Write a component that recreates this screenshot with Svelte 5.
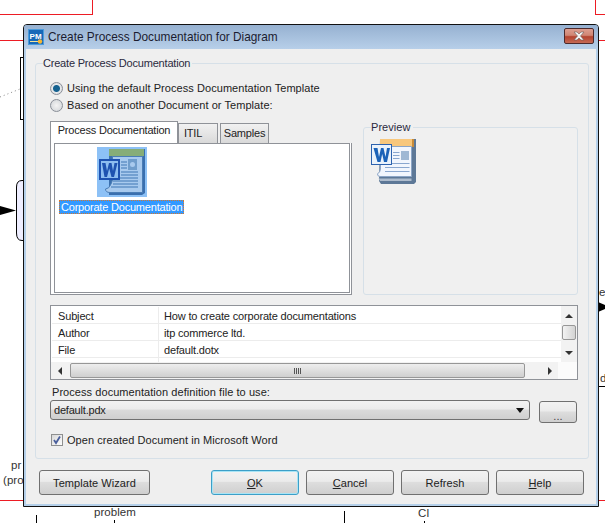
<script>
  const rows = [
    { key: 'Subject', value: 'How to create corporate documentations' },
    { key: 'Author', value: 'itp commerce ltd.' },
    { key: 'File', value: 'default.dotx' }
  ];
  const tabs = ['Process Documentation', 'ITIL', 'Samples'];
</script>

<div class="desktop">
  <svg class="diagram" width="605" height="523" viewBox="0 0 605 523">
    <g fill="none" stroke="#ed1c24" shape-rendering="crispEdges">
      <path d="M0 14.5H92.5V0" />
      <path d="M0 40.5H24" />
      <path d="M595.5 0V14.5H605" />
      <path d="M598 40.5H605" />
      <path d="M0 500.5H24" />
      <path d="M598 500.5H605" />
    </g>
    <path d="M24 57.5H20.5V119.5H24" fill="none" stroke="#000" shape-rendering="crispEdges" />
    <path d="M0 97L20 89" fill="none" stroke="#888" stroke-dasharray="1 3" />
    <path d="M24 180.5H22Q16.5 180.500 16.5 187V233Q16.5 240.500 22 240.500H24" fill="#eeeeff" stroke="#000" />
    <path d="M0 206L16 210.500L0 215Z" fill="#000" />
    <path d="M598 302L605 305L605 309L598 312Z" fill="#000" />
    <path d="M598 386.500H605" stroke="#000" shape-rendering="crispEdges" />
    <path d="M36.500 515V523M114.500 520V523M344.500 511V523M424.500 521V523" stroke="#000" shape-rendering="crispEdges" />
    <g class="dtext">
      <text x="11" y="469">pr</text>
      <text x="3" y="484">(pro</text>
      <text x="94" y="516">problem</text>
      <text x="418" y="517">CI</text>
      <text x="599" y="296">ec</text>
      <text x="600" y="382">d</text>
    </g>
  </svg>

  <div class="window">
    <div class="titlebar">
      <svg class="appicon" width="16" height="16" viewBox="0 0 16 16">
        <rect width="16" height="16" fill="#4a9bdc" />
        <rect x="1" y="1" width="14" height="14" fill="#1668b8" />
        <path d="M2 12.500H10" stroke="#f3e39a" />
        <circle cx="12" cy="12.500" r="2.200" fill="#f7b733" />
        <text x="1.500" y="9.500" class="pm">PM</text>
      </svg>
      <span class="title">Create Process Documentation for Diagram</span>
      <div class="close">
        <svg width="16" height="10" viewBox="0 0 16 10">
          <path d="M3 1L6 1L8 3L10 1L13 1L9.500 5L13 9L10 9L8 7L6 9L3 9L6.500 5Z" fill="#f2f2f2" stroke="#6b5a58" stroke-width="0.6" />
        </svg>
      </div>
    </div>

    <div class="body">
      <fieldset class="group main">
        <legend>Create Process Documentation</legend>

        <div class="radios">
          <label class="radio"><span class="dot on"></span>Using the default Process Documentation Template</label>
          <label class="radio"><span class="dot"></span>Based on another Document or Template:</label>
        </div>

        <div class="split">
          <div class="tabs">
            <div class="tabstrip">
              {#each tabs as tab, i}
                <div class="tab" class:active={i === 0}>{tab}</div>
              {/each}
            </div>
            <div class="panel">
              <div class="inner">
                <div class="item">
                  <div class="tile">
                    <svg width="50" height="50" viewBox="0 0 50 50">
                      <rect width="50" height="50" fill="#8dc1f6" />
                      <path d="M12 2H48V46L45 48H12Z" fill="#3a6fae" />
                      <rect x="12" y="2" width="35" height="7" fill="#86ad78" />
                      <path d="M15.500 9.500H45.500V45.500H13Q8.500 45.500 8.500 42Q12 42 14 37L15.500 33Z" fill="#a8caee" stroke="#4a7db6" />
                      <rect x="31" y="12" width="9" height="11" fill="#6f9dcc" />
                      <circle cx="35.500" cy="17.500" r="2.500" fill="#a8caee" />
                      <path d="M24 15H30M24 18H30M24 21H30M24 25H41M24 28H41M16 31H41M16 34H41M16 37H41M14 40H41" stroke="#3f76b4" />
                      <rect x="2" y="12" width="21" height="21" fill="#1e52b0" />
                      <rect x="4" y="14" width="17" height="17" fill="#8dbdf0" />
                      <path d="M5 16H8.500L10 24L12 16H14.500L16 24L17.500 16H20.500L17 30H14.500L12.200 21.500L10 30H7.500Z" fill="#1e52b0" />
                    </svg>
                  </div>
                  <span class="caption">Corporate Documentation</span>
                </div>
              </div>
            </div>
          </div>

          <fieldset class="group preview">
            <legend>Preview</legend>
            <svg width="46" height="46" viewBox="0 0 46 46">
              <path d="M9 1H45V44L43 46H10L8 43Z" fill="#5d7897" />
              <rect x="9" y="1" width="34" height="8" fill="#f8c77c" />
              <rect x="41" y="1" width="2" height="8" fill="#c98c3a" />
              <path d="M7.500 40.500H40.500V43H9Z" fill="#aebccd" />
              <path d="M9.500 8.500H40.500V38.500H9Q6.500 38.500 6.500 36Q9.500 34 9.500 30Z" fill="#f2f6fd" stroke="#8ca5c6" />
              <rect x="30" y="13" width="8" height="9" fill="#9fb8d4" />
              <path d="M22 14.500H28.500M22 17.500H28.500M22 20.500H28.500M14 25.500H38.500M14 29.500H38.500M14 33.500H38.500" stroke="#8aa7cf" />
              <rect x="0.500" y="6.500" width="20" height="20" fill="#eaf2fb" stroke="#2d62ae" />
              <path d="M2.500 10H6.500L8 19L10 10H12.500L14.500 19L16 10H19L16 24H13L11.200 16L9.500 24H6.500Z" fill="#1b62b8" />
            </svg>
          </fieldset>
        </div>

        <div class="props">
          <div class="propmain">
            <div class="grid">
              {#each rows as row}
                <div class="row">
                  <span class="key">{row.key}</span>
                  <span class="val">{row.value}</span>
                </div>
              {/each}
              <div class="row"><span class="key"></span><span class="val"></span></div>
            </div>
            <div class="vscroll">
              <span class="arrow up"></span>
              <span class="vthumb"></span>
              <span class="arrow down"></span>
            </div>
          </div>
          <div class="hscroll">
            <span class="arrow left"></span>
            <span class="hthumb"><span class="grip"></span></span>
            <span class="arrow right"></span>
          </div>
        </div>

        <div class="fieldlabel">Process documentation definition file to use:</div>
        <div class="comborow">
          <div class="combo">
            <span>default.pdx</span>
            <span class="caret"></span>
          </div>
          <div class="btn dots">...</div>
        </div>

        <label class="check">
          <span class="box">
            <svg width="10" height="10" viewBox="0 0 10 10">
              <path d="M2 5L4 8L8 1.500" fill="none" stroke="#4a5f9c" stroke-width="1.800" />
            </svg>
          </span>
          Open created Document in Microsoft Word
        </label>
      </fieldset>

      <div class="buttons">
        <div class="btn wizard">Template Wizard</div>
        <div class="btn default"><u>O</u>K</div>
        <div class="btn"><u>C</u>ancel</div>
        <div class="btn">Refresh</div>
        <div class="btn"><u>H</u>elp</div>
      </div>
    </div>
  </div>
</div>

<style>
  :global(body) {
    margin: 0;
    background: #fff;
  }

  .desktop {
    position: relative;
    width: 605px;
    height: 523px;
    overflow: hidden;
    font-family: "Liberation Sans", sans-serif;
    font-size: 11px;
    letter-spacing: 0.06px;
    color: #222;
  }

  .diagram {
    position: absolute;
    left: 0;
    top: 0;
  }

  .dtext text {
    font-family: "Liberation Sans", sans-serif;
    font-size: 11.500px;
    fill: #333;
  }

  .window {
    position: absolute;
    left: 23px;
    top: 24px;
    width: 576px;
    height: 483px;
    box-sizing: border-box;
    display: flex;
    flex-direction: column;
    border: 1px solid #111;
    border-radius: 4px 4px 0 0;
    background: #b5d0ea;
  }

  .titlebar {
    height: 24px;
    display: flex;
    align-items: center;
    padding: 0 4px;
    flex: none;
    background: linear-gradient(#96b1d1, #b7cfe9);
    border-radius: 3px 3px 0 0;
  }

  .appicon {
    margin-right: 2px;
    flex: none;
  }

  .pm {
    font-family: "Liberation Sans", sans-serif;
    font-size: 8px;
    font-weight: 700;
    fill: #fff;
  }

  .title {
    flex: 1;
    margin-left: 2px;
    font-size: 11.850px;
    letter-spacing: 0;
    color: #1c1c30;
  }

  .close {
    width: 30px;
    height: 16px;
    margin-top: -3px;
    box-sizing: border-box;
    display: flex;
    align-items: center;
    justify-content: center;
    border: 1px solid #4d2a2c;
    border-radius: 2px;
    background: linear-gradient(#dd9e90 0, #d08674 45%, #b4432f 55%, #c56a55 100%);
  }

  .body {
    flex: 1;
    margin: 0 2px 2px;
    padding: 7px 7px 0 9px;
    background: #efefef;
    display: flex;
    flex-direction: column;
  }

  .group {
    margin: 0;
    border: 1px solid #d6e0e8;
    border-radius: 3px;
    min-width: 0;
  }

  .group legend {
    padding: 0 2px 0 0;
    line-height: 14px;
    color: #2a2a40;
  }

  .main {
    height: 403px;
    box-sizing: border-box;
    padding: 11px 10px 0 14px;
    display: flex;
    flex-direction: column;
  }

  .main > legend {
    margin-left: -7px;
    letter-spacing: -0.2px;
  }

  .radios {
    display: flex;
    flex-direction: column;
    gap: 3px;
  }

  .radio {
    display: flex;
    align-items: center;
    height: 14px;
    gap: 4px;
  }

  .dot {
    width: 11px;
    height: 11px;
    border-radius: 50%;
    border: 1px solid #8a8f98;
    background: radial-gradient(circle, #f4f4f4, #cfd2d6);
    flex: none;
  }

  .dot.on {
    background: radial-gradient(circle, #15618f 0 3px, #e8eaec 4px, #c9ccd0 100%);
  }

  .split {
    display: flex;
    margin-top: 8px;
    gap: 11px;
    height: 175px;
  }

  .tabs {
    width: 302px;
    flex: none;
    display: flex;
    flex-direction: column;
  }

  .tabstrip {
    display: flex;
    height: 23px;
    align-items: flex-end;
    flex: none;
  }

  .tab {
    height: 20px;
    box-sizing: border-box;
    border: 1px solid #8f9298;
    border-bottom: 0;
    padding: 3px 0 0;
    text-align: center;
    white-space: nowrap;
    letter-spacing: -0.2px;
    background: linear-gradient(#f1f1f1, #d9d9d9);
    width: 49px;
    margin-left: 1px;
  }

  .tab:nth-child(2) {
    width: 40px;
    margin-left: 0;
    padding-right: 10px;
  }

  .tab:nth-child(3) {
    margin-left: 2px;
  }

  .tab.active {
    width: 128px;
    height: 22px;
    margin-left: 0;
    padding-top: 2px;
    background: #fff;
  }

  .panel {
    flex: 1;
    border: 1px solid #8f9298;
    border-top: 0;
    background: #fff;
    padding: 0 1px 1px 3px;
    display: flex;
  }

  .inner {
    flex: 1;
    border: 1px solid #8f9298;
    display: flex;
    flex-direction: column;
    align-items: flex-start;
    padding: 3px 0 0 4px;
  }

  .item {
    display: flex;
    flex-direction: column;
    align-items: center;
    gap: 3px;
  }

  .tile {
    height: 50px;
    line-height: 0;
  }

  .caption {
    background: #3399ff;
    color: #fff;
    height: 14px;
    line-height: 14px;
    padding: 0 2px;
    letter-spacing: -0.2px;
    outline: 1px dotted #d9782a;
    outline-offset: -1px;
    white-space: nowrap;
  }

  .preview {
    width: 215px;
    box-sizing: border-box;
    height: 175px;
    padding: 4px 0 0 7px;
    background: #f0f0f0;
  }

  .props {
    margin-top: 10px;
    height: 75px;
    box-sizing: border-box;
    border: 1px solid #8f9298;
    width: 528px;
    background: #fff;
    display: flex;
    flex-direction: column;
  }

  .propmain {
    display: flex;
    flex: 1;
    min-height: 0;
    overflow: hidden;
  }

  .grid {
    flex: 1;
    padding: 1px 0 0 1px;
    letter-spacing: -0.16px;
  }

  .row {
    display: flex;
    height: 17px;
    box-sizing: border-box;
    border-bottom: 1px solid #ececec;
    line-height: 18px;
  }

  .key {
    width: 107px;
    padding-left: 6px;
    box-sizing: border-box;
    border-right: 1px solid #ececec;
  }

  .val {
    padding-left: 5px;
  }

  .vscroll {
    width: 16px;
    flex: none;
    background: #f2f2f2;
    display: flex;
    flex-direction: column;
    align-items: center;
    justify-content: space-between;
    position: relative;
    padding: 8px 0 7px;
    box-sizing: border-box;
  }

  .vthumb {
    position: absolute;
    left: 1px;
    top: 19px;
    width: 14px;
    height: 15px;
    box-sizing: border-box;
    border: 1px solid #979797;
    border-radius: 2px;
    background: linear-gradient(90deg, #f3f3f3, #d3d3d3);
  }

  .hscroll {
    height: 17px;
    flex: none;
    background: linear-gradient(90deg, #f2f2f2 507px, #fbfbfb 507px);
    display: flex;
    align-items: center;
    padding: 0 25px 0 7px;
  }

  .hthumb {
    flex: 1;
    height: 15px;
    margin: 0 23px 0 8px;
    box-sizing: border-box;
    border: 1px solid #979797;
    border-radius: 2px;
    background: linear-gradient(#eeeeee, #cfcfcf);
    display: flex;
    align-items: center;
    justify-content: center;
  }

  .grip {
    width: 7px;
    height: 6px;
    background: repeating-linear-gradient(90deg, #555 0 1px, transparent 1px 2px);
  }

  .arrow {
    width: 0;
    height: 0;
    flex: none;
  }

  .arrow.up {
    border: 4px solid transparent;
    border-top: 0;
    border-bottom-color: #333;
  }

  .arrow.down {
    border: 4px solid transparent;
    border-bottom: 0;
    border-top-color: #333;
  }

  .arrow.left {
    border: 4px solid transparent;
    border-left: 0;
    border-right-color: #333;
  }

  .arrow.right {
    border: 4px solid transparent;
    border-right: 0;
    border-left-color: #333;
  }

  .fieldlabel {
    margin-top: 5px;
    margin-left: 2px;
    line-height: 14px;
  }

  .comborow {
    display: flex;
    align-items: flex-start;
    margin-top: 1px;
    gap: 9px;
  }

  .combo {
    width: 480px;
    height: 20px;
    box-sizing: border-box;
    border: 1px solid #707070;
    border-radius: 3px;
    display: flex;
    align-items: center;
    justify-content: space-between;
    padding: 0 5px 0 3px;
    letter-spacing: -0.2px;
    background: linear-gradient(#f2f2f2 0, #ebebeb 45%, #dadada 50%, #cfcfcf 100%);
  }

  .caret {
    width: 0;
    height: 0;
    border: 4px solid transparent;
    border-bottom: 0;
    border-top: 5px solid #111;
  }

  .check {
    display: flex;
    align-items: center;
    gap: 4px;
    height: 14px;
    margin: 10px 0 0 1px;
  }

  .box {
    width: 12px;
    height: 12px;
    box-sizing: border-box;
    border: 1px solid #8e8f8f;
    background: linear-gradient(135deg, #d8d8d8, #fdfdfd);
    line-height: 0;
    flex: none;
  }

  .buttons {
    display: flex;
    gap: 7px;
    margin-top: 11px;
    margin-left: 4px;
  }

  .btn {
    width: 88px;
    height: 25px;
    box-sizing: border-box;
    border: 1px solid #707070;
    border-radius: 3px;
    display: flex;
    align-items: center;
    justify-content: center;
    white-space: pre;
    background: linear-gradient(#f2f2f2 0, #ebebeb 45%, #dddddd 50%, #cfcfcf 100%);
  }

  .btn.wizard {
    width: 111px;
    margin-right: 54px;
  }

  .btn.default {
    border-color: #3c9fc8;
    box-shadow: inset 0 0 0 1px #a8e4f5;
  }

  .btn.dots {
    width: 38px;
    height: 22px;
    margin-top: 1px;
    align-items: flex-end;
    color: #444;
  }
</style>
